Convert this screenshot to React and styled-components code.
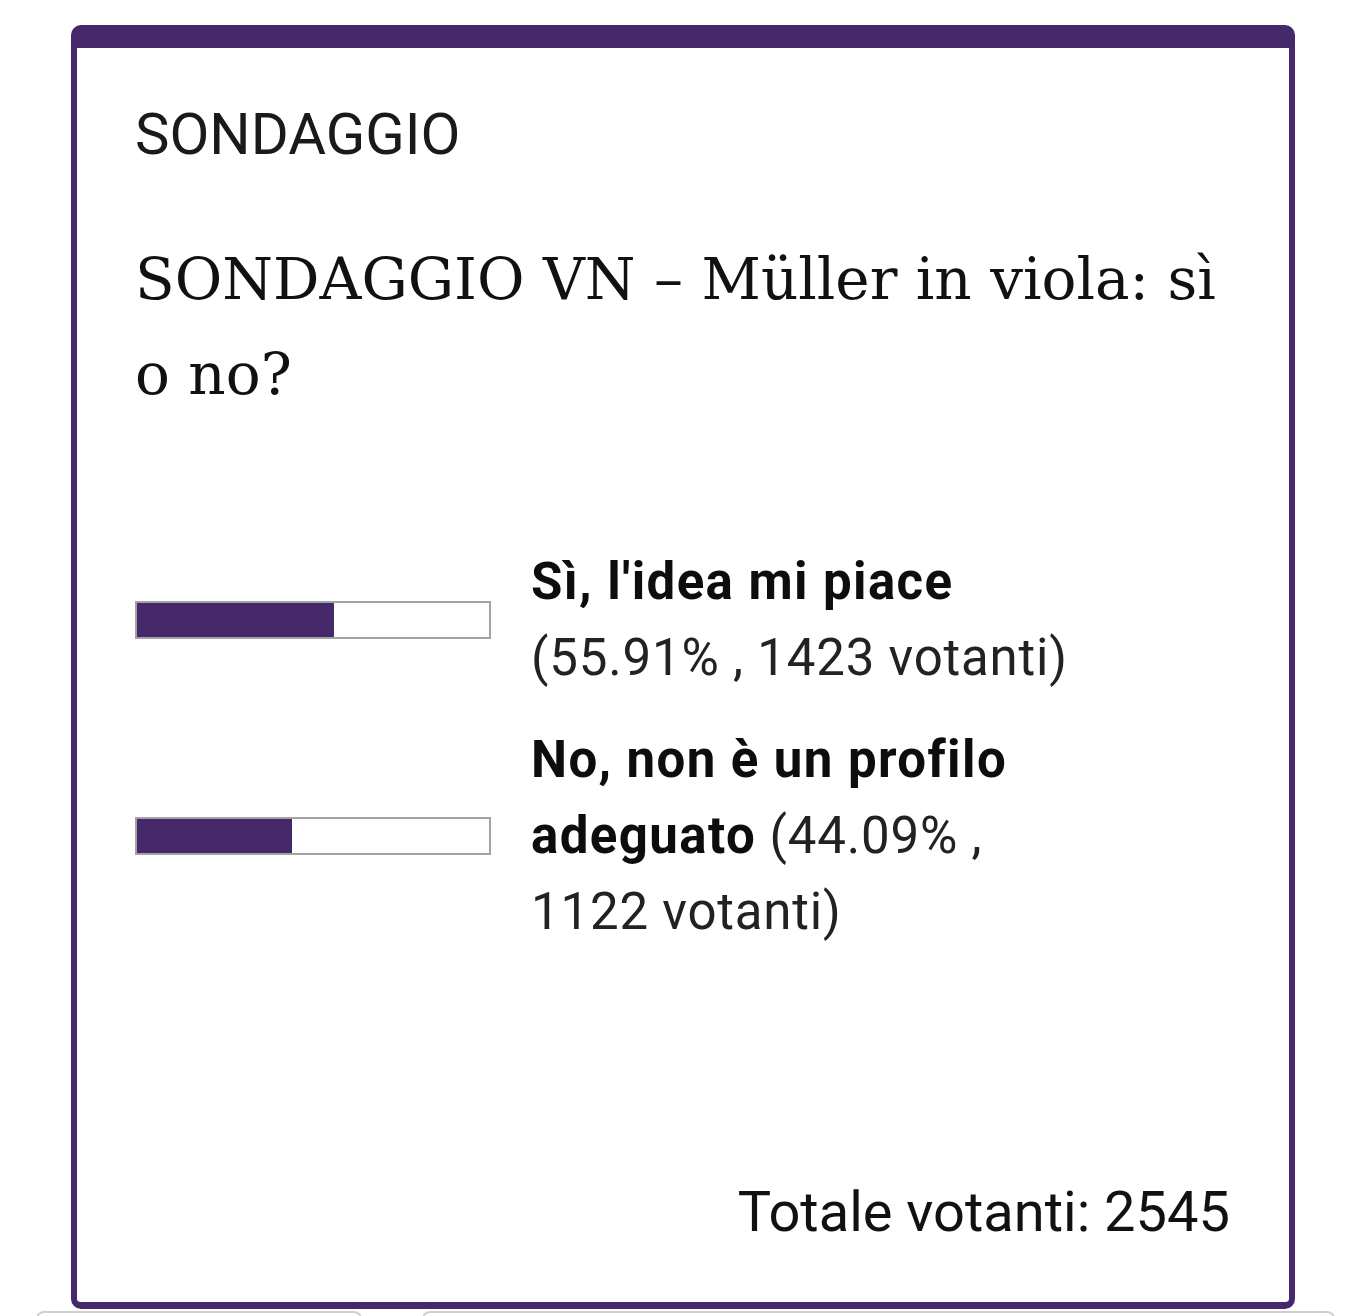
import React from 'react'
import styled, { createGlobalStyle } from 'styled-components'

const GlobalStyle = createGlobalStyle`
  body {
    margin: 0;
    background: #ffffff;
    font-family: Roboto, 'Liberation Sans', sans-serif;
    color: #111;
  }
`

const purple = '#46296a'

const Page = styled.div`
  width: 1366px;
  height: 1316px;
  overflow: hidden;
  position: relative;
`

const Card = styled.section`
  box-sizing: border-box;
  margin: 25px 0 0 71px;
  width: 1224px;
  height: 1284px;
  border: 6px solid ${purple};
  border-top-width: 23px;
  border-bottom-width: 7px;
  border-radius: 10px;
  padding: 50px 59px 0 58px;
  display: flex;
  flex-direction: column;
`

const Label = styled.div`
  font-family: Roboto, sans-serif;
  font-size: 58px;
  line-height: 72px;
  color: #1a1a1a;
`

const Title = styled.h2`
  margin: 62px 0 0;
  font-family: 'DejaVu Serif', 'Liberation Serif', serif;
  font-weight: normal;
  font-size: 58px;
  line-height: 95px;
  color: #111;
`

const Options = styled.div`
  margin-top: 122px;
  display: flex;
  flex-direction: column;
  gap: 26px;
`

const Option = styled.div`
  display: flex;
  align-items: center;
  gap: 40px;
`

const Bar = styled.div`
  flex: 0 0 356px;
  height: 38px;
  box-sizing: border-box;
  border: 2px solid #a3a3a3;
  background: #fff;
  display: flex;
`

const Fill = styled.div`
  background: ${purple};
  height: 100%;
`

const OptionText = styled.div`
  width: 565px;
  font-size: 51px;
  line-height: 76px;
  letter-spacing: 0.8px;
  color: #222;
`

const Answer = styled.strong`
  font-weight: 700;
  letter-spacing: 1.4px;
  color: #0d0d0d;
`

const Total = styled.div`
  margin-top: auto;
  margin-bottom: 58px;
  align-self: flex-end;
  font-size: 56px;
  line-height: 64px;
  color: #111;
`

const Tabs = styled.div`
  position: absolute;
  left: 0;
  right: 0;
  top: 1311px;
  display: flex;
  gap: 60px;
  padding: 0 31px 0 36px;
`

const Tab = styled.div`
  flex: ${(p) => p.grow};
  height: 30px;
  border: 2px solid #cfcfcf;
  border-bottom: none;
  border-radius: 8px 8px 0 0;
`

const results = [
  { answer: "Sì, l'idea mi piace", pct: 55.91, votes: 1423 },
  { answer: 'No, non è un profilo adeguato', pct: 44.09, votes: 1122 },
]

export default function App() {
  return (
    <Page>
      <GlobalStyle />
      <Card>
        <Label>SONDAGGIO</Label>
        <Title>SONDAGGIO VN – Müller in viola: sì o no?</Title>
        <Options>
          {results.map((r) => (
            <Option key={r.answer}>
              <Bar>
                <Fill style={{ width: `${r.pct}%` }} />
              </Bar>
              <OptionText>
                <Answer>{r.answer}</Answer> ({r.pct.toFixed(2)}% , {r.votes} votanti)
              </OptionText>
            </Option>
          ))}
        </Options>
        <Total>Totale votanti: 2545</Total>
      </Card>
      <Tabs>
        <Tab grow="0 0 322px" />
        <Tab grow="1" />
      </Tabs>
    </Page>
  )
}
